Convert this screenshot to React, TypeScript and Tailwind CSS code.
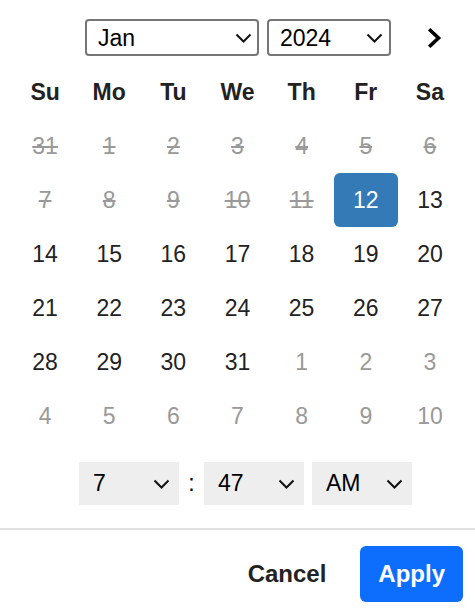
import { useState } from "react"

const months = ["Jan", "Feb", "Mar", "Apr", "May", "Jun", "Jul", "Aug", "Sep", "Oct", "Nov", "Dec"]
const weekdays = ["Su", "Mo", "Tu", "We", "Th", "Fr", "Sa"]

type Day = { n: number; muted?: boolean; disabled?: boolean }

// Jan 2024, with the first 11 days blocked
const days: Day[] = [
  { n: 31, muted: true, disabled: true },
  ...[1, 2, 3, 4, 5, 6, 7, 8, 9, 10, 11].map((n) => ({ n, muted: true, disabled: true })),
  ...Array.from({ length: 20 }, (_, i) => ({ n: i + 12 })),
  ...[1, 2, 3, 4, 5, 6, 7, 8, 9, 10].map((n) => ({ n, muted: true })),
]

function Caret({ className = "" }: { className?: string }) {
  return (
    <svg
      width="17"
      height="10"
      viewBox="0 0 17 10"
      fill="none"
      className={`pointer-events-none absolute top-1/2 -translate-y-1/2 ${className}`}
    >
      <path d="M1.5 1.5 L8.5 8.5 L15.5 1.5" stroke="#111" strokeWidth="2" />
    </svg>
  )
}

interface PickProps {
  value: string
  options: string[]
  onChange: (v: string) => void
  className?: string
  caret?: string
}

function Pick({ value, options, onChange, className = "", caret = "right-[9px]" }: PickProps) {
  return (
    <div className="relative">
      <select
        value={value}
        onChange={(e) => onChange(e.target.value)}
        className={`appearance-none outline-none text-[23px] text-black ${className}`}
      >
        {options.map((o) => (
          <option key={o}>{o}</option>
        ))}
      </select>
      <Caret className={caret} />
    </div>
  )
}

export default function App() {
  const [month, setMonth] = useState("Jan")
  const [year, setYear] = useState("2024")
  const [selected, setSelected] = useState(12)
  const [hour, setHour] = useState("7")
  const [minute, setMinute] = useState("47")
  const [ampm, setAmpm] = useState("AM")

  const timeCls = "w-[100px] h-[43px] pl-[14px] bg-[#eee]"

  return (
    <div className="w-[475px] bg-white text-[#222] font-['Liberation_Sans',Arial,sans-serif]">

      {/* HEADER */}

      <div className="flex items-center pl-[85px] pr-[32px] pt-[19px]">
        <div className="flex gap-2">
          <Pick
            value={month}
            options={months}
            onChange={setMonth}
            caret="right-[7px]"
            className="block w-[174px] h-[37px] pl-[11px] border-2 border-[#767676] rounded-[4px] bg-white"
          />
          <Pick
            value={year}
            options={["2022", "2023", "2024", "2025", "2026"]}
            onChange={setYear}
            caret="right-[8px]"
            className="block w-[124px] h-[37px] pl-[11px] border-2 border-[#767676] rounded-[4px] bg-white"
          />
        </div>
        <button className="ml-auto text-black">
          <svg width="16" height="20" viewBox="0 0 16 20" fill="none">
            <path d="M3.5 2.5 L11.5 10 L3.5 17.5" stroke="currentColor" strokeWidth="3.6" strokeLinecap="square" />
          </svg>
        </button>
      </div>

      {/* CALENDAR */}

      <div className="grid grid-cols-7 px-[13px] mt-[9px]">
        {weekdays.map((d) => (
          <div key={d} className="h-[54px] flex items-center justify-center text-[23px] font-bold text-[#222]">
            {d}
          </div>
        ))}
        {days.map((d, i) => {
          const isSel = !d.muted && d.n === selected
          return (
            <button
              key={i}
              onClick={() => !d.disabled && setSelected(d.n)}
              className={`h-[54px] flex items-center justify-center text-[23px] rounded-[6px] ${
                isSel ? "bg-[#337ab7] text-white" : d.muted ? "text-[#999]" : "text-[#222]"
              } ${d.disabled ? "line-through" : ""}`}
            >
              {d.n}
            </button>
          )
        })}
      </div>

      {/* TIME */}

      <div className="flex items-center justify-center gap-2 pl-4 mt-[19px]">
        <Pick
          value={hour}
          options={Array.from({ length: 12 }, (_, i) => String(i + 1))}
          onChange={setHour}
          className={timeCls}
        />
        <span className="w-[9px] text-center text-[23px] text-black">:</span>
        <Pick
          value={minute}
          options={Array.from({ length: 60 }, (_, i) => String(i).padStart(2, "0"))}
          onChange={setMinute}
          className={timeCls}
        />
        <Pick value={ampm} options={["AM", "PM"]} onChange={setAmpm} className={timeCls} />
      </div>

      {/* FOOTER */}

      <div className="mt-[23px] border-t-2 border-[#e0e0e0] flex justify-end items-center gap-[16px] pt-[16px] pr-[12px] pb-3">
        <button className="h-[56px] px-[18px] text-[24px] font-bold text-[#222] rounded-[6px]">
          Cancel
        </button>
        <button className="h-[56px] px-[18px] text-[24px] font-bold text-white bg-[#0d6efd] rounded-[6px]">
          Apply
        </button>
      </div>

    </div>
  )
}
